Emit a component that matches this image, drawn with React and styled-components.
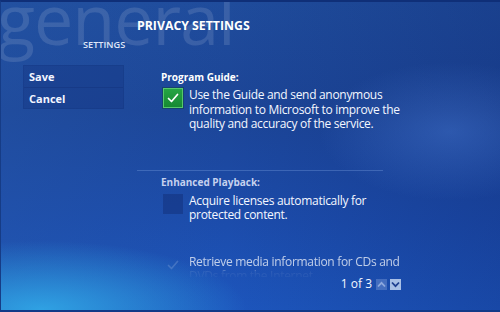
import React from "react";
import styled, { createGlobalStyle } from "styled-components";

const Global = createGlobalStyle`
  html, body { margin: 0; padding: 0; background: #0c2a6e; }
  * { box-sizing: border-box; }
`;

const Screen = styled.div`
  position: relative;
  width: 500px;
  height: 312px;
  overflow: hidden;
  font-family: "Open Sans", "DejaVu Sans", sans-serif;
  color: #fff;
  border-top: 2px solid #0f2f78;
  border-bottom: 2px solid #123a88;
  border-left: 1px solid #163c86;
  background:
    radial-gradient(ellipse 55% 30% at 8% 100%, rgba(50, 175, 235, 0.85), rgba(50, 175, 235, 0) 75%),
    radial-gradient(ellipse 35% 30% at 90% 42%, rgba(70, 120, 210, 0.45), rgba(70, 120, 210, 0) 75%),
    linear-gradient(90deg, rgba(40, 90, 170, 0.35) 0%, rgba(40, 90, 170, 0) 45%, rgba(10, 30, 100, 0.25) 100%),
    linear-gradient(180deg, #1f4c9c 0%, #1c4597 35%, #1c4cab 70%, #1d56bd 100%);
  display: flex;
  flex-direction: column;
`;

const Watermark = styled.div`
  position: absolute;
  left: -4px;
  top: -19px;
  font-size: 70px;
  line-height: 1;
  font-weight: 400;
  letter-spacing: -1px;
  color: rgba(255, 255, 255, 0.12);
  pointer-events: none;
  white-space: nowrap;
`;

const Title = styled.h1`
  position: relative;
  margin: 16px 0 0 136px;
  font-size: 12.3px;
  line-height: 16px;
  font-weight: 700;
  white-space: nowrap;
`;

const Subtitle = styled.div`
  position: relative;
  margin: 5px 0 0 82px;
  font-size: 9.2px;
  line-height: 12px;
  font-weight: 600;
  color: #dfe6f8;
  white-space: nowrap;
`;

const Body = styled.div`
  position: relative;
  display: flex;
  margin-top: 14px;
`;

const Sidebar = styled.nav`
  margin-left: 22px;
  width: 101px;
  align-self: flex-start;
  background: rgba(12, 32, 105, 0.2);
  border: 1px solid rgba(10, 30, 100, 0.12);
  display: flex;
  flex-direction: column;
`;

const MenuItem = styled.div`
  height: 21px;
  padding-left: 5px;
  font-size: 11px;
  line-height: 21px;
  font-weight: 700;
  color: #f2f5ff;
  border-top: ${(p) => (p.$first ? "none" : "1px solid rgba(10, 30, 95, 0.2)")};
`;

const Content = styled.main`
  margin-left: 13px;
  width: 264px;
  display: flex;
  flex-direction: column;
`;

const Section = styled.section`
  padding-left: 24px;
  padding-top: ${(p) => p.$top || 0}px;
`;

const Label = styled.div`
  font-size: 10px;
  line-height: 14px;
  font-weight: 700;
  white-space: nowrap;
  color: ${(p) => (p.$dim ? "#c6d1ee" : "#ffffff")};
`;

const Option = styled.div`
  display: flex;
  align-items: flex-start;
  gap: 6px;
  margin-top: ${(p) => p.$top || 0}px;
  margin-left: 2px;
`;

const Box = styled.div`
  flex: none;
  width: 20px;
  height: 20px;
  display: flex;
  align-items: center;
  justify-content: center;
  ${(p) =>
    p.$state === "checked"
      ? `background: linear-gradient(180deg, #25a544 0%, #168a32 100%);
         border: 1px solid #56c86c;
         box-shadow: 0 0 0 1px rgba(10, 60, 30, 0.35);`
      : p.$state === "faded"
      ? `background: transparent;`
      : `background: rgba(14, 34, 100, 0.35);`}
`;

const OptionText = styled.div`
  font-size: 12px;
  line-height: 14.5px;
  letter-spacing: -0.3px;
  white-space: nowrap;
  color: ${(p) => (p.$faded ? "rgba(255,255,255,0.72)" : "#f4f7ff")};
  ${(p) =>
    p.$faded
      ? `height: 22px; overflow: hidden;
         -webkit-mask-image: linear-gradient(180deg, #000 0, #000 14px, rgba(0,0,0,0.12) 16px, rgba(0,0,0,0.06) 22px);
         mask-image: linear-gradient(180deg, #000 0, #000 14px, rgba(0,0,0,0.12) 16px, rgba(0,0,0,0.06) 22px);`
      : ""}
`;

const Divider = styled.hr`
  margin: 38px 0 0 0;
  width: 246px;
  border: none;
  height: 1px;
  background: rgba(140, 175, 235, 0.3);
`;

const Pager = styled.div`
  display: flex;
  justify-content: flex-end;
  align-items: center;
  gap: 3px;
`;

const PageText = styled.span`
  font-size: 12px;
  line-height: 14px;
  margin-right: 1px;
  color: #f4f7ff;
  white-space: nowrap;
`;

const ArrowBtn = styled.div`
  width: 11px;
  height: 11px;
  margin-top: 2px;
  display: flex;
  align-items: center;
  justify-content: center;
  background: ${(p) => (p.$active ? "#a9c0e6" : "rgba(150, 175, 225, 0.35)")};
`;

const Check = ({ color = "#fff" }) => (
  <svg width="14" height="14" viewBox="0 0 14 14">
    <path d="M2.5 7.5 L5.5 10.5 L11.5 3.5" fill="none" stroke={color} strokeWidth="1.7" strokeLinecap="round" strokeLinejoin="round" />
  </svg>
);

const Chevron = ({ up, color }) => (
  <svg width="9" height="7" viewBox="0 0 9 7">
    <path d={up ? "M1 5.5 L4.5 1.8 L8 5.5" : "M1 1.5 L4.5 5.2 L8 1.5"} fill="none" stroke={color} strokeWidth="1.8" strokeLinejoin="miter" />
  </svg>
);

export default function App() {
  return (
    <>
      <Global />
      <Screen>
        <Watermark>general</Watermark>
        <Title>PRIVACY SETTINGS</Title>
        <Subtitle>SETTINGS</Subtitle>
        <Body>
          <Sidebar>
            <MenuItem $first>Save</MenuItem>
            <MenuItem>Cancel</MenuItem>
          </Sidebar>
          <Content>
            <Section $top={5}>
              <Label>Program Guide:</Label>
              <Option $top={4}>
                <Box $state="checked">
                  <Check />
                </Box>
                <OptionText>
                  Use the Guide and send anonymous
                  <br />
                  information to Microsoft to improve the
                  <br />
                  quality and accuracy of the service.
                </OptionText>
              </Option>
            </Section>
            <Divider />
            <Section $top={4}>
              <Label $dim>Enhanced Playback:</Label>
              <Option $top={5}>
                <Box $state="empty" />
                <OptionText>
                  Acquire licenses automatically for
                  <br />
                  protected content.
                </OptionText>
              </Option>
              <Option $top={32}>
                <Box $state="faded">
                  <Check color="rgba(255,255,255,0.16)" />
                </Box>
                <OptionText $faded>
                  Retrieve media information for CDs and
                  <br />
                  DVDs from the Internet
                </OptionText>
              </Option>
            </Section>
            <Pager>
              <PageText>1 of 3</PageText>
              <ArrowBtn>
                <Chevron up color="rgba(200, 215, 245, 0.55)" />
              </ArrowBtn>
              <ArrowBtn $active>
                <Chevron color="#1f3f8f" />
              </ArrowBtn>
            </Pager>
          </Content>
        </Body>
      </Screen>
    </>
  );
}
